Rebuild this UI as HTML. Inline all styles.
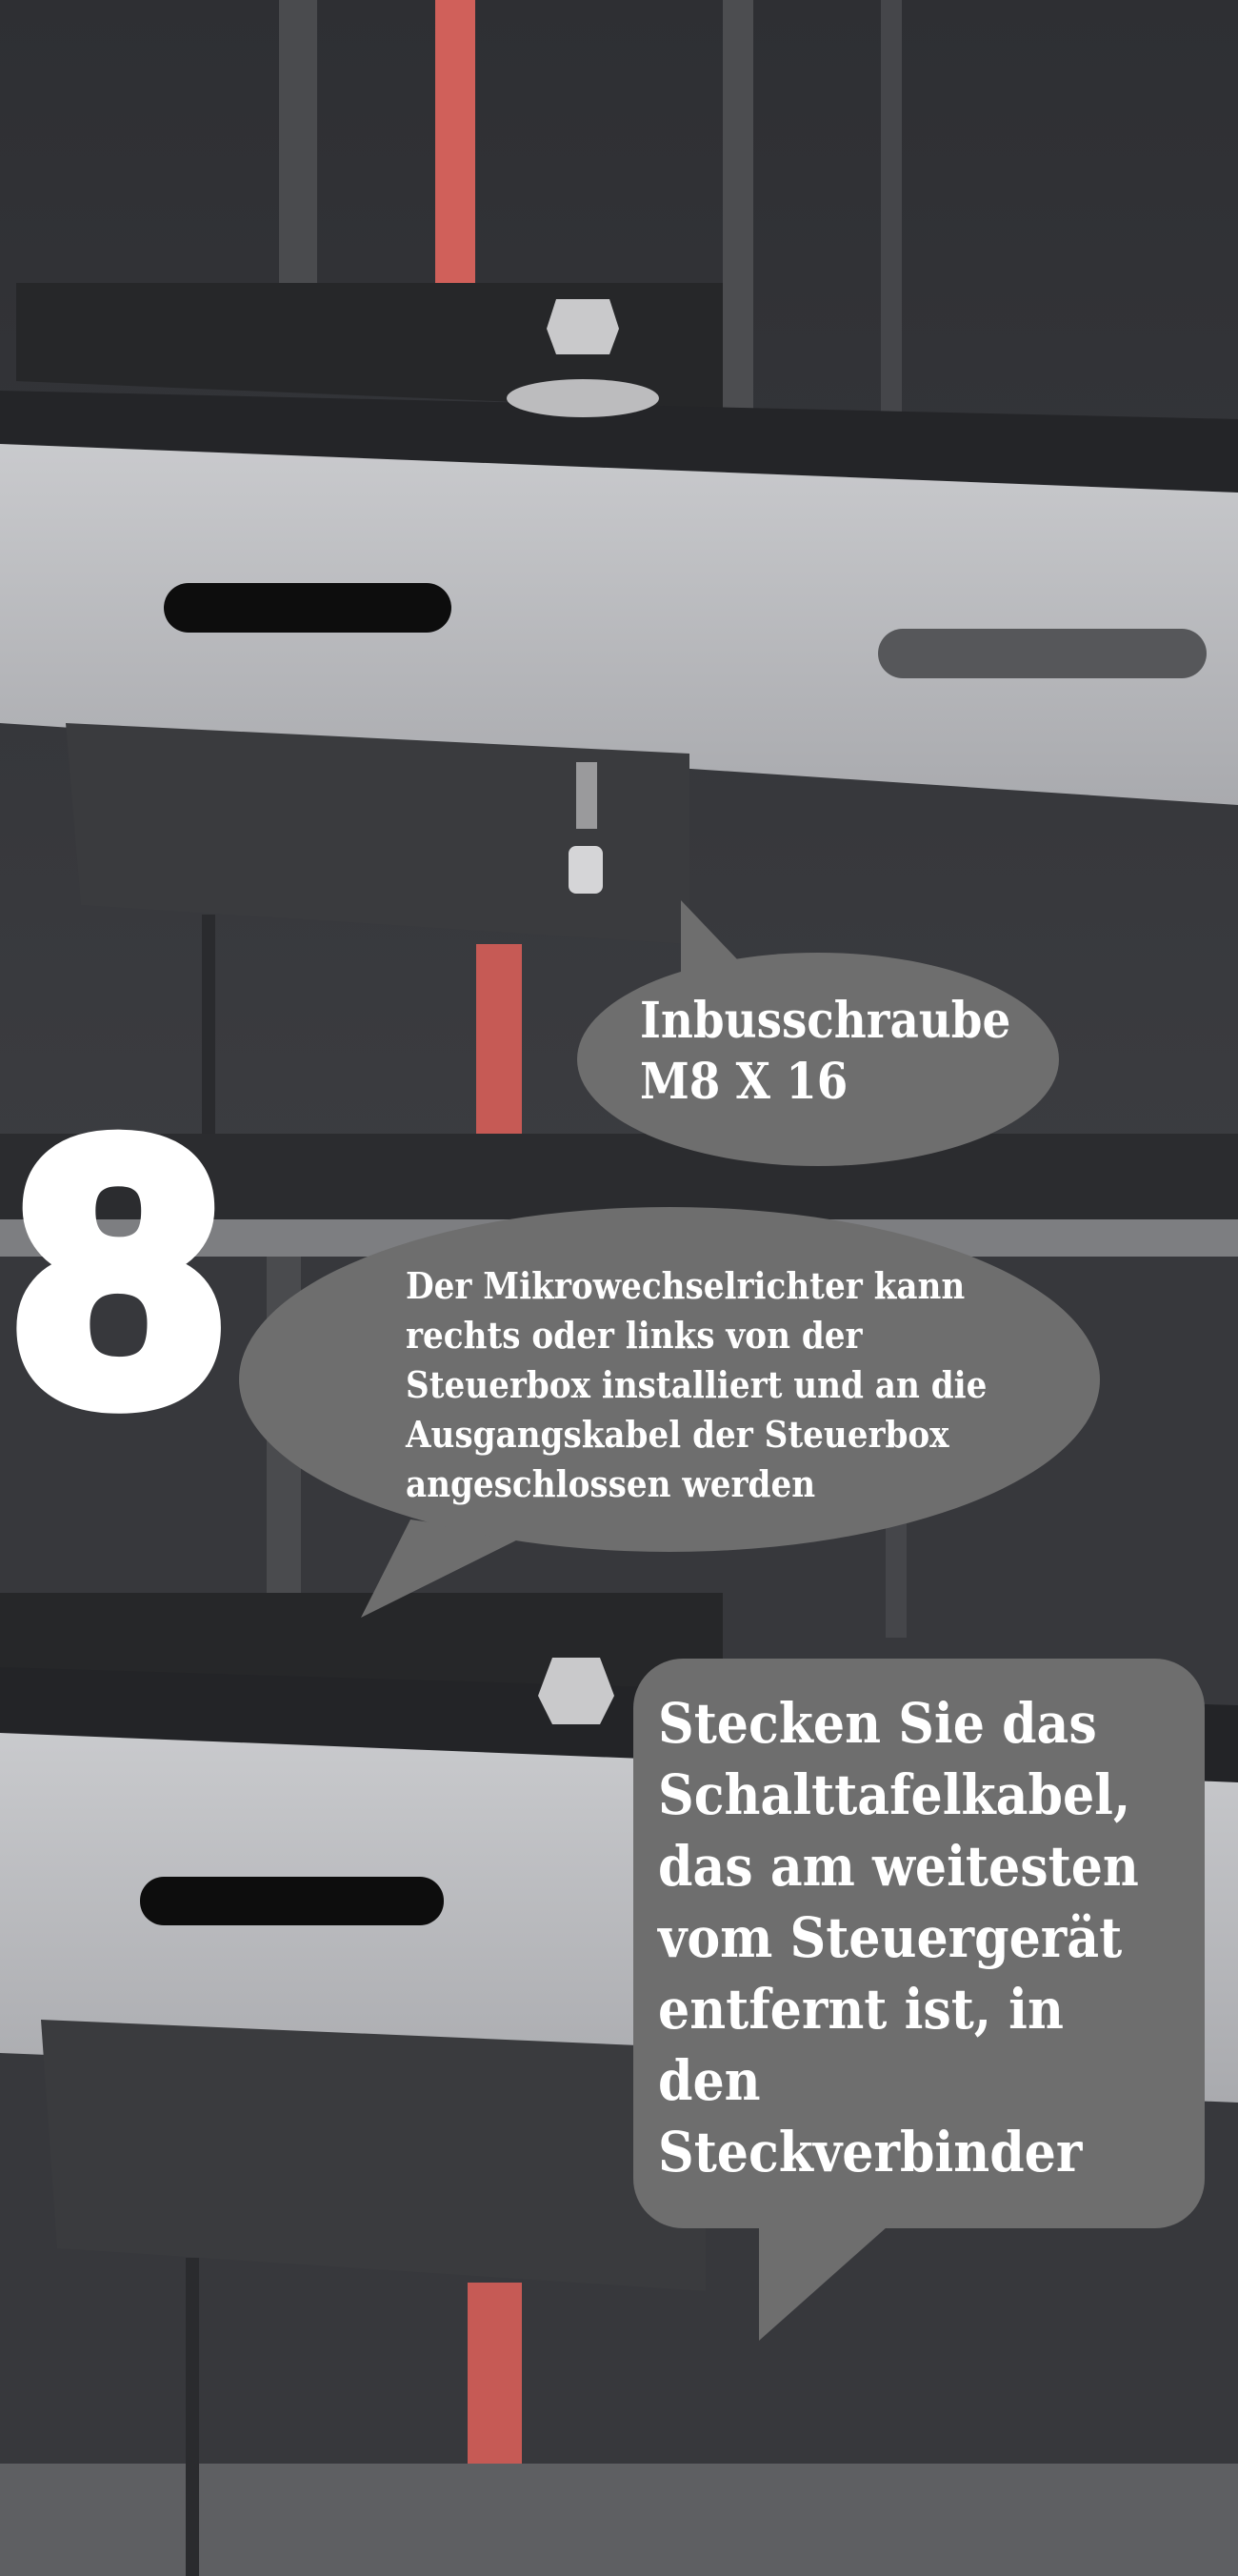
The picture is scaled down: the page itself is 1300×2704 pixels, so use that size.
<!DOCTYPE html>
<html><head><meta charset="utf-8"><style>
html,body{margin:0;padding:0;}
body{width:1300px;height:2704px;position:relative;overflow:hidden;background:#35363a;}
.t{position:absolute;color:#fff;font-family:"DejaVu Serif Condensed","DejaVu Serif","Liberation Serif",serif;font-weight:bold;white-space:nowrap;}
svg{position:absolute;left:0;top:0;}
</style></head><body>
<svg width="1300" height="2704" viewBox="0 0 1300 2704">
<defs>
<linearGradient id="bg1" x1="0" y1="0" x2="0" y2="1"><stop offset="0" stop-color="#2e2f33"/><stop offset="1" stop-color="#3c3d41"/></linearGradient>
<linearGradient id="rail" x1="0" y1="0" x2="0" y2="1"><stop offset="0" stop-color="#c9cacd"/><stop offset="1" stop-color="#a9aaae"/></linearGradient>
</defs>
<rect x="0" y="0" width="1300" height="1319" fill="url(#bg1)"/>
<rect x="293" y="0" width="40" height="330" fill="#4a4b4e"/>
<rect x="759" y="0" width="32" height="440" fill="#4c4d50"/>
<rect x="925" y="0" width="22" height="460" fill="#45464a"/>
<rect x="457" y="0" width="42" height="340" fill="#d0605a"/>
<polygon points="17,297 759,297 759,431 17,400" fill="#262729"/>
<polygon points="0,410 1300,440 1300,517 0,466" fill="#242528"/>
<polygon points="0,466 1300,517 1300,845 0,759" fill="url(#rail)"/>
<rect x="172" y="612" width="302" height="52" rx="26" fill="#0d0d0d"/>
<rect x="922" y="660" width="345" height="52" rx="26" fill="#56575a"/>
<polygon points="69,759 724,791 724,991 85,950" fill="#3a3b3e"/>
<rect x="500" y="991" width="48" height="290" fill="#c65a55"/>
<rect x="212" y="960" width="14" height="360" fill="#2a2b2e"/>
<polygon points="584,314 640,314 650,345 640,372 584,372 574,345" fill="#c9c9cb"/>
<ellipse cx="612" cy="418" rx="80" ry="20" fill="#bcbcbe"/>
<rect x="605" y="800" width="22" height="70" fill="#9a9a9c"/>
<rect x="597" y="888" width="36" height="50" rx="8" fill="#d5d5d7"/>
<rect x="0" y="1190" width="1300" height="129" fill="#2b2c2f"/>
<rect x="0" y="1280" width="1300" height="39" fill="#7d7e81"/>
<rect x="0" y="1319" width="1300" height="1385" fill="#37383c"/>
<rect x="280" y="1319" width="36" height="400" fill="#4a4b4e"/>
<rect x="930" y="1319" width="22" height="400" fill="#45464a"/>
<rect x="452" y="1690" width="34" height="30" fill="#c65a55"/>
<polygon points="0,1672 759,1672 759,1793 0,1760" fill="#262729"/>
<polygon points="0,1750 1300,1790 1300,1871 0,1827" fill="#232427"/>
<polygon points="0,1819 1300,1871 1300,2207 0,2155" fill="url(#rail)"/>
<rect x="147" y="1970" width="319" height="51" rx="25" fill="#0d0d0d"/>
<polygon points="43,2120 741,2150 741,2405 60,2360" fill="#3a3b3e"/>
<rect x="491" y="2396" width="57" height="308" fill="#c65a55"/>
<rect x="0" y="2586" width="1300" height="118" fill="#5e5f62"/>
<rect x="195" y="2370" width="14" height="334" fill="#2a2b2e"/>
<polygon points="580,1740 630,1740 645,1780 630,1810 580,1810 565,1780" fill="#c9c9cb"/>
<polygon points="715,945 776,1009 715,1034" fill="#6e6e6e"/>
<ellipse cx="859" cy="1112" rx="253" ry="112" fill="#6e6e6e"/>
<polygon points="431,1595 379,1698 552,1612" fill="#6e6e6e"/>
<ellipse cx="703" cy="1448" rx="452" ry="181" fill="#6e6e6e"/>
<rect x="665" y="1741" width="600" height="598" rx="52" fill="#6e6e6e"/>
<polygon points="797,2330 940,2330 797,2457" fill="#6e6e6e"/>
</svg>
<div style="position:absolute;left:16px;top:1122px;font:900 390px/425px 'Liberation Sans',sans-serif;color:#fff;-webkit-text-stroke:22px #fff;">8</div>
<div class="t" style="left:672px;top:1040px;font-size:52px;line-height:64px;">Inbusschraube<br>M8 X 16</div>
<div class="t" style="left:426px;top:1324px;font-size:38px;line-height:52px;">Der Mikrowechselrichter kann<br>rechts oder links von der<br>Steuerbox installiert und an die<br>Ausgangskabel der Steuerbox<br>angeschlossen werden</div>
<div class="t" style="left:691px;top:1772px;font-size:58px;line-height:75px;">Stecken Sie das<br>Schalttafelkabel,<br>das am weitesten<br>vom Steuergerät<br>entfernt ist, in<br>den<br>Steckverbinder</div>
</body></html>
